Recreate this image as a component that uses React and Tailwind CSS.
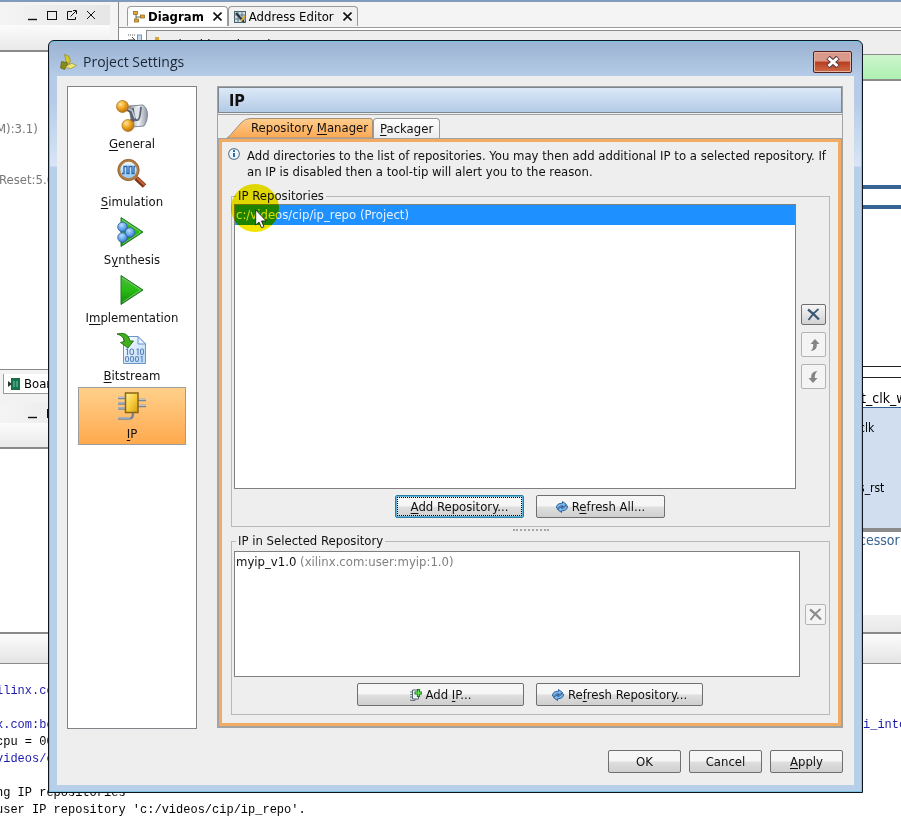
import { useState } from 'react';
import clsx from 'clsx';

const SECTIONS = [
  { name: 'General', key: 0, Icon: GeneralIcon },
  { name: 'Simulation', key: 0, Icon: SimulationIcon },
  { name: 'Synthesis', key: 1, Icon: SynthesisIcon },
  { name: 'Implementation', key: 1, Icon: ImplementationIcon },
  { name: 'Bitstream', key: 0, Icon: BitstreamIcon },
  { name: 'IP', key: 0, Icon: ChipIcon },
];

/* ── Icons ── */
function GeneralIcon() {
  return (
    <svg className="w-8 h-8" viewBox="0 0 32 32">
      <defs>
        <radialGradient id="ball" cx="0.35" cy="0.3" r="0.8">
          <stop offset="0" stopColor="#ffe49a" />
          <stop offset="0.45" stopColor="#f0a823" />
          <stop offset="1" stopColor="#a8660c" />
        </radialGradient>
        <linearGradient id="steel" x1="0" x2="1">
          <stop offset="0" stopColor="#7f8792" />
          <stop offset="0.5" stopColor="#f4f6f9" />
          <stop offset="1" stopColor="#8c95a3" />
        </linearGradient>
      </defs>
      <path d="M13 6 L27 5 Q31.500 8 31.500 15 Q31.500 22 28 26 L16 27 Z" fill="url(#steel)" stroke="#838b98" />
      <path d="M17 8 L18 17 Q19 21 22 20 Q24 19 25 7" fill="#dfe4ec" stroke="#5c6472" strokeWidth="1.800" />
      <path d="M7 7 L15 11 L18 19 L12 25" fill="none" stroke="#59606d" strokeWidth="4" />
      <path d="M8 6.500 L16 10.500 L19 18.500" fill="none" stroke="#c7ccd5" strokeWidth="1.500" />
      <circle cx="6.500" cy="6.500" r="6" fill="url(#ball)" stroke="#a56a16" strokeWidth="0.700" />
      <circle cx="12" cy="25.500" r="6" fill="url(#ball)" stroke="#a56a16" strokeWidth="0.700" />
    </svg>
  );
}

function SimulationIcon() {
  return (
    <svg className="w-8 h-8" viewBox="0 0 32 32">
      <defs>
        <linearGradient id="lens" x1="0" y1="0" x2="0" y2="1">
          <stop offset="0" stopColor="#f3faff" />
          <stop offset="1" stopColor="#86c5f4" />
        </linearGradient>
      </defs>
      <path d="M20 20 L28.500 28" stroke="#7c3213" strokeWidth="5" />
      <path d="M21 20 L28.500 27" stroke="#c8653a" strokeWidth="2" />
      <circle cx="12.500" cy="12" r="9.500" fill="url(#lens)" stroke="#b57a3c" strokeWidth="2.500" />
      <circle cx="12.500" cy="12" r="10.700" fill="none" stroke="#7d572f" strokeWidth="0.700" />
      <path d="M6 15.500 H8 V8.500 H11 V15.500 H13 V8.500 H16 V15.500 H18 V8.500 H19.500" fill="none" stroke="#2465ad" strokeWidth="1.300" />
    </svg>
  );
}

function Triangle() {
  return (
    <>
      <defs>
        <linearGradient id="green" x1="0" y1="0" x2="0" y2="1">
          <stop offset="0" stopColor="#54b845" />
          <stop offset="0.5" stopColor="#27bd12" />
          <stop offset="1" stopColor="#168311" />
        </linearGradient>
      </defs>
      <path d="M5 1.500 L27 16 L5 30.500 Z" fill="url(#green)" stroke="#23782a" strokeLinejoin="round" />
      <path d="M6.500 4 L24.500 16 L6.500 28" fill="none" stroke="#7bd36a" strokeWidth="0.800" />
    </>
  );
}

function SynthesisIcon() {
  return (
    <svg className="w-8 h-8" viewBox="0 0 32 32">
      <defs>
        <radialGradient id="blue" cx="0.4" cy="0.3" r="0.8">
          <stop offset="0" stopColor="#b8ddff" />
          <stop offset="0.6" stopColor="#5b9ee6" />
          <stop offset="1" stopColor="#2b62ac" />
        </radialGradient>
      </defs>
      <Triangle />
      <g fill="url(#blue)" stroke="#2c5f9f" strokeWidth="0.800">
        <circle cx="6.500" cy="11" r="4.800" />
        <circle cx="6.500" cy="21.500" r="4.800" />
        <circle cx="14" cy="16.500" r="4.800" />
      </g>
    </svg>
  );
}

function ImplementationIcon() {
  return (
    <svg className="w-8 h-8" viewBox="0 0 32 32">
      <Triangle />
    </svg>
  );
}

function BitstreamIcon() {
  return (
    <svg className="w-8 h-8" viewBox="0 0 32 32">
      <defs>
        <linearGradient id="sheet" x1="0" y1="0" x2="1" y2="1">
          <stop offset="0" stopColor="#ffffff" />
          <stop offset="1" stopColor="#b4d7f7" />
        </linearGradient>
      </defs>
      <path d="M7.500 4.500 H22 L29.500 12 V31.500 H7.500 Z" fill="url(#sheet)" stroke="#6f95c8" />
      <path d="M22 4.500 V12 H29.500 Z" fill="#e6f2ff" stroke="#6f95c8" />
      <g fill="none" stroke="#5a84bb" strokeWidth="1.100">
        <path d="M10 17.500 L11.500 17 V23 M20.500 17.500 L22 17 V23" />
        <rect x="14" y="17" width="3.500" height="5.500" rx="1.500" />
        <rect x="24.500" y="17" width="3" height="5.500" rx="1.500" />
        <rect x="9.500" y="24.500" width="3" height="5" rx="1.500" />
        <rect x="14.500" y="24.500" width="3" height="5" rx="1.500" />
        <rect x="19.500" y="24.500" width="3" height="5" rx="1.500" />
        <path d="M24.500 25 L26 24.500 V30" />
      </g>
      <path d="M1 2 Q12 -1 14 9 H17.500 L12 16 L4.500 10.500 L8.500 9.500 Q8 4 1 2 Z" fill="#41b01c" stroke="#1f6d12" strokeWidth="0.900" />
    </svg>
  );
}

function ChipIcon() {
  return (
    <svg className="w-8 h-8" viewBox="0 0 32 32">
      <defs>
        <linearGradient id="gold" x1="0" y1="0" x2="1" y2="1">
          <stop offset="0" stopColor="#ffef9b" />
          <stop offset="0.5" stopColor="#f7cd3c" />
          <stop offset="1" stopColor="#d69e13" />
        </linearGradient>
      </defs>
      <g fill="none" stroke="#77879a" strokeWidth="2.600">
        <path d="M2 8 H9 M2 13.500 H9 M2 18.500 H9 M22 10 H30 M22 16 H30 M2 28.500 H14 Q17 28.500 17 23" />
      </g>
      <g fill="none" stroke="#c8d2dd" strokeWidth="0.800">
        <path d="M2 7.500 H9 M2 13 H9 M2 18 H9 M22 9.500 H30 M22 15.500 H30 M2 28 H14" />
      </g>
      <rect x="9.500" y="3" width="12.500" height="19.500" fill="url(#gold)" stroke="#8b6414" strokeWidth="1.500" />
    </svg>
  );
}

function LogoIcon() {
  return (
    <svg className="w-[17px] h-4" viewBox="0 0 17 16">
      <path d="M4.500 0.500 L8.500 2 L10.500 6.500 L9.500 9.500 L6.500 8.500 Z" fill="#d8cc24" stroke="#8c8614" strokeWidth="0.700" />
      <path d="M7 8.500 L1.500 7.500 L0.500 14 L4.500 15.500 L7.500 11 Z" fill="#878a1b" stroke="#5d6312" strokeWidth="0.700" />
      <path d="M8 11 L12 9.300 L16.500 11.500 L11 14.500 L5.500 13.500 Z" fill="#f0e77a" stroke="#99922a" strokeWidth="0.700" />
    </svg>
  );
}

function InfoIcon() {
  return (
    <svg className="w-3 h-3 shrink-0" viewBox="0 0 12 12">
      <circle cx="6" cy="6" r="5.400" fill="#eef7fd" stroke="#66798b" strokeWidth="1.100" />
      <rect x="5" y="2" width="2" height="2" fill="#2b6ea8" />
      <path d="M5 5 H7 V9 H5 Z" fill="#2b6ea8" />
    </svg>
  );
}

function RefreshIcon() {
  return (
    <svg className="w-3 h-3" viewBox="0 0 12 12">
      <g fill="#7db8ee" stroke="#1f538f" strokeWidth="0.900" strokeLinejoin="round">
        <path d="M0.500 7 Q0.500 2.500 5.500 2.300 H6.500 V0.500 L10.500 3.500 L6.500 6.500 V4.700 H5.500 Q3 5 2.500 7.500 Z" />
        <path d="M11.500 5 Q11.500 9.500 6.500 9.700 H5.500 V11.500 L1.500 8.500 L5.500 5.500 V7.300 H6.500 Q9 7 9.500 4.500 Z" />
      </g>
    </svg>
  );
}

function AddIpIcon() {
  return (
    <svg className="w-3 h-3" viewBox="0 0 12 12">
      <path d="M2.500 1 H8.500 V10 H2.500 Z" fill="#eef3f9" stroke="#59626f" />
      <path d="M0 3 H2 M0 5.500 H2 M0 8 H2 M0.500 10.500 V11.500 H5 V10" fill="none" stroke="#6d7887" />
      <path d="M8.500 0 V8 M4.500 4 H12" stroke="#147a1c" strokeWidth="3.200" />
      <path d="M8.500 1 V7 M5.500 4 H11.300" stroke="#63dd55" strokeWidth="1.300" />
    </svg>
  );
}

function CrossIcon({ color }) {
  return (
    <svg className="w-[13px] h-[13px]" viewBox="0 0 13 13" fill="none" stroke={color}>
      <path d="M1 1.500 Q7 6 12 11.500" strokeWidth="2.200" />
      <path d="M11.500 1 Q6 5 1.500 12" strokeWidth="1.800" />
    </svg>
  );
}

function ArrowIcon({ down }) {
  return (
    <svg className={clsx('w-3 h-3', down && 'rotate-180')} viewBox="0 0 12 12">
      <path d="M7 0 L11.500 5 H8.800 V7 Q8.300 11.500 2.500 12 Q5.200 10 5.200 7 V5 H2.500 Z" fill="#858585" />
    </svg>
  );
}

function TinyX() {
  return (
    <svg className="w-[9px] h-[9px]" viewBox="0 0 9 9" stroke="#111" strokeWidth="1.600">
      <path d="M0.500 0.500 L8.500 8.500 M8.500 0.500 L0.500 8.500" />
    </svg>
  );
}

/* ── Shared controls ── */

// label with one underlined shortcut letter
function Mnemonic({ text, at }) {
  if (at === undefined) return <span>{text}</span>;
  return (
    <span>
      {text.slice(0, at)}
      <span className="underline underline-offset-2">{text[at]}</span>
      {text.slice(at + 1)}
    </span>
  );
}

function PushButton({ text, at, icon, className, focused }) {
  return (
    <button
      type="button"
      className={clsx(
        'relative h-[23px] flex items-center justify-center gap-1 rounded-xs border bg-linear-to-b from-[#f6f6f6] from-45% via-[#dedede] via-55% to-[#cfcfcf]',
        focused ? 'border-[#2c7da6] ring-1 ring-inset ring-[#5db4dc]' : 'border-[#6f6f6f]',
        className
      )}
    >
      {focused && <span className="absolute inset-px border border-dotted border-black" />}
      {icon}
      <Mnemonic text={text} at={at} />
    </button>
  );
}

function IconButton({ label, disabled, className, children }) {
  return (
    <button
      type="button"
      aria-label={label}
      disabled={disabled}
      className={clsx(
        'flex items-center justify-center rounded-xs border',
        disabled ? 'border-[#b3b3b3] bg-[#f4f4f4]' : 'border-[#6f6f6f] bg-linear-to-b from-[#f6f6f6] to-[#d2d2d2]',
        className
      )}
    >
      {children}
    </button>
  );
}

/* ── Main window behind the dialog ── */
function PanelHeader({ small }) {
  return (
    <div className="h-5 flex items-center justify-end pr-[14px] bg-linear-to-r from-[#f4f4f4] to-[#e6e6e6]">
      <svg className="w-[70px] h-3" viewBox="0 0 70 12" fill="none" stroke="#111">
        <path d="M2 10.500 H11" strokeWidth="1.400" />
        <rect x="21.500" y="2.500" width="9" height="8" />
        {!small && <path d="M46 2.500 H41.500 V10.500 H49.500 V8 M44.500 7.500 L50 2 M47 1.500 H50.500 V5 M61 2 L69 10 M69 2 L61 10" />}
      </svg>
    </div>
  );
}

function LeftColumn() {
  return (
    <div className="w-[110px] shrink-0 flex flex-col bg-white text-[#777] overflow-hidden">
      <div className="h-[3px] bg-[#f4f4f4]" />
      <PanelHeader />
      <div className="h-[27px] bg-linear-to-b from-[#fcfcfc] to-[#e9e9e9] border-b-2 border-[#8a8a8a]" />
      <div className="h-[318px] pt-[69px] border-b border-[#8a8a8a]">
        <p className="-ml-1 leading-4 whitespace-nowrap">M):3.1)</p>
        <p className="mt-[35px] -ml-px leading-4 whitespace-nowrap">Reset:5.0</p>
      </div>
      <div className="h-[33px] pt-1 bg-[#f2f2f2]">
        <button type="button" className="h-5 w-20 ml-[3px] pl-1 flex items-center gap-1 bg-white border border-t-0 border-[#9a9a9a] text-black">
          <svg className="w-3 h-3" viewBox="0 0 12 12">
            <rect x="3" y="0" width="9" height="12" fill="#16734d" />
            <path d="M6 3 V9 M9 3 V9" stroke="#6fd0a0" />
            <path d="M0 3 L4 6 L0 9 Z" fill="#333" />
          </svg>
          Board
        </button>
      </div>
      <PanelHeader small />
      <div className="h-[26px] bg-linear-to-b from-[#fcfcfc] to-[#e9e9e9] border-b-2 border-[#8a8a8a]" />
      <div className="flex-1" />
    </div>
  );
}

function EditorTab({ children, active }) {
  return (
    <div
      className={clsx(
        'h-5 flex items-center gap-[3px] px-[5px] rounded-t-sm border border-b-0 border-[#9a9a9a]',
        active ? 'bg-white font-bold' : 'bg-[#f1f1f1]'
      )}
    >
      {children}
    </div>
  );
}

function RightColumn() {
  return (
    <div className="flex-1 flex flex-col border-l border-[#8a8a8a] bg-white overflow-hidden">
      <div className="h-[25px] shrink-0 pt-1 pl-2 flex bg-[#f4f4f4]">
        <EditorTab active>
          <svg className="w-3 h-3" viewBox="0 0 12 12">
            <path d="M3 2 V10 H6 M3 6 H8" fill="none" stroke="#666" />
            <g fill="#e3a92f" stroke="#87611a" strokeWidth="0.700">
              <rect x="0.500" y="0.500" width="4" height="3" />
              <rect x="1.500" y="8" width="4" height="3" />
              <rect x="7.500" y="4" width="4" height="3" />
            </g>
          </svg>
          Diagram
          <button type="button" aria-label="Close Diagram" className="pl-[6px]"><TinyX /></button>
        </EditorTab>
        <EditorTab>
          <svg className="w-3 h-3" viewBox="0 0 12 12">
            <rect x="0.500" y="0.500" width="11" height="11" fill="#d4dde0" stroke="#49616b" />
            <path d="M0 4 H12 M0 8 H12 M4 0 V12 M8 0 V12" stroke="#587985" />
            <path d="M2 2 L10 11" stroke="#27323a" strokeWidth="2" />
            <path d="M7 10 L11 5" stroke="#e0a92b" strokeWidth="2" />
          </svg>
          Address Editor
          <button type="button" aria-label="Close Address Editor" className="pl-[6px]"><TinyX /></button>
        </EditorTab>
      </div>
      <div className="h-[27px] shrink-0 flex border-t border-[#9a9a9a] bg-white">
        <div className="w-[27px] pt-[6px] pl-2">
          <svg className="w-4 h-3" viewBox="0 0 16 12">
            <path d="M1 1 H9" stroke="#555" strokeDasharray="1 1" />
            <path d="M1 6 H8 M5 3 L8 6 L5 9" fill="none" stroke="#444" />
            <rect x="10.500" y="1" width="4" height="11" fill="#c9dcef" stroke="#6f95c8" />
          </svg>
        </div>
        <div className="mt-0.5 flex-1 flex items-start gap-2 px-2 pt-[6px] border-t border-l border-[#8a8a8a] bg-[#eee]">
          <span className="w-1 h-2 bg-[#d8a72e]" />
          <span className="leading-4">microblaze_board_system</span>
        </div>
      </div>
      <div className="h-[27px] shrink-0 border-t border-b-2 border-[#8a8a8a] bg-linear-to-b from-[#cdf5cd] to-[#adf0b1]" />
      {/* block design canvas */}
      <div className="h-[286px] shrink-0 pt-[104px] border-b border-[#222]">
        <div className="h-1 bg-[#376492]" />
        <div className="h-1 mt-4 bg-[#376492]" />
      </div>
      <div className="mt-[10px] shrink-0 border-t border-[#222] flex justify-end">
        <div className="w-[42px]">
          <p className="h-[29px] pt-3 pl-0.5 text-sm leading-4 whitespace-nowrap text-black">t_clk_wiz</p>
          <div className="h-[125px] pt-3 bg-[#d0deef] border-t border-b-4 border-t-[#376492] border-b-[#8c8c8c] text-xs text-black">
            <p className="leading-4">clk</p>
            <p className="mt-11 leading-4">s_rst</p>
          </div>
          <p className="text-sm leading-4 text-[#376492]">cessor</p>
        </div>
      </div>
      <div className="flex-1" />
      <div className="h-[17px] shrink-0 bg-linear-to-b from-[#f2f2f2] to-[#e8e8e8]" />
    </div>
  );
}

const LOG = [
  { text: 'ilinx.com', blue: true },
  { text: '' },
  { text: 'x.com:board', blue: true, tail: 'i_into' },
  { text: 'cpu = 000' },
  { text: 'videos/ci', blue: true },
  { text: '' },
  { text: 'ng IP repositories' },
  { text: "user IP repository 'c:/videos/cip/ip_repo'." },
];

function Workspace() {
  return (
    <div className="min-h-screen flex flex-col border-t-2 border-[#7f9bbb] bg-[#f4f4f4]">
      <div className="flex-1 flex gap-2">
        <LeftColumn />
        <RightColumn />
      </div>
      <div className="h-8 border-t-2 border-b border-[#8a8a8a] bg-linear-to-b from-[#fcfcfc] to-[#e4e4e4]" />
      <div className="h-[164px] pt-[19px] bg-white overflow-hidden text-xs font-['Liberation_Mono',monospace]">
        {LOG.map((line, i) => (
          <p key={i} className={clsx('h-[17px] flex justify-between leading-[17px] whitespace-pre', line.blue ? 'text-[#1a1aae]' : 'text-black')}>
            <span className="-ml-1">{line.text}</span>
            {line.tail && <span className="w-[38px] overflow-hidden">{line.tail}</span>}
          </p>
        ))}
      </div>
    </div>
  );
}

/* ── Dialog parts ── */
function Sidebar({ current, onSelect }) {
  return (
    <nav className="w-[130px] shrink-0 p-[10px] border border-[#808488] bg-white">
      {SECTIONS.map(({ name, key, Icon }) => (
        <button
          key={name}
          type="button"
          onClick={() => onSelect(name)}
          className={clsx(
            'w-full h-[58px] pt-0.5 flex flex-col items-center gap-1 border leading-4',
            name === current ? 'border-[#9c9c9c] bg-linear-to-b from-[#ffd08a] to-[#ffa94d]' : 'border-transparent'
          )}
        >
          <Icon />
          <Mnemonic text={name} at={key} />
        </button>
      ))}
    </nav>
  );
}

function RepositoryManager() {
  return (
    <div className="flex-1 flex flex-col pl-[9px] pr-2 pb-2 pt-[6px] border-3 border-[#f2ab62] outline outline-[#a3a3a3]">
      <div className="flex gap-[7px] -ml-[3px] -mr-2 mb-2">
        <InfoIcon />
        <p className="leading-4 whitespace-nowrap">
          Add directories to the list of repositories. You may then add additional IP to a selected repository. If
          <br />
          an IP is disabled then a tool-tip will alert you to the reason.
        </p>
      </div>

      <fieldset className="flex-1 flex flex-col min-w-0 pl-0.5 pr-[3px] pb-2 border border-[#b9b9b9]">
        <legend className="ml-0.5 px-0.5 h-4 leading-4">IP Repositories</legend>
        <div className="h-full flex flex-col">
          <div className="flex-1 flex items-center gap-[5px]">
            <ul className="self-stretch flex-1 border border-[#808080] bg-white">
              <li className="h-5 px-px leading-5 bg-[#1e90ff] text-[#e6f3ff]">c:/videos/cip/ip_repo (Project)</li>
            </ul>
            <div className="flex flex-col gap-[7px]">
              <IconButton label="Remove repository" className="w-[25px] h-[21px]"><CrossIcon color="#3c5775" /></IconButton>
              <IconButton label="Move up" disabled className="w-[25px] h-[25px]"><ArrowIcon /></IconButton>
              <IconButton label="Move down" disabled className="w-[25px] h-[25px]"><ArrowIcon down /></IconButton>
            </div>
          </div>
          <div className="mt-[6px] flex justify-center gap-3">
            <PushButton text="Add Repository..." at={0} className="w-[129px]" focused />
            <PushButton text="Refresh All..." at={1} icon={<RefreshIcon />} className="w-[129px]" />
          </div>
        </div>
      </fieldset>

      <div className="h-[6px] flex items-center justify-center">
        <div className="w-9 border-t-2 border-dotted border-[#a5a5a5]" />
      </div>

      <fieldset className="min-w-0 pl-0.5 pr-[3px] pt-0.5 pb-2 border border-[#b9b9b9]">
        <legend className="ml-0.5 px-0.5 h-4 leading-4">IP in Selected Repository</legend>
        <div className="flex items-center gap-[5px]">
          <ul className="h-[126px] flex-1 border border-[#808080] bg-white">
            <li className="h-5 px-px leading-5">
              myip_v1.0 <span className="text-[#808080]">(xilinx.com:user:myip:1.0)</span>
            </li>
          </ul>
          <IconButton label="Remove IP" disabled className="w-[21px] h-[21px]"><CrossIcon color="#8c8c8c" /></IconButton>
        </div>
        <div className="mt-[6px] flex justify-center gap-3">
          <PushButton text="Add IP..." at={4} icon={<AddIpIcon />} className="w-[167px]" />
          <PushButton text="Refresh Repository..." at={2} icon={<RefreshIcon />} className="w-[167px]" />
        </div>
      </fieldset>
    </div>
  );
}

function ProjectSettings() {
  const [section, setSection] = useState('IP');

  return (
    <div
      role="dialog"
      aria-label="Project Settings"
      className="absolute left-12 right-[38px] top-10 bottom-[35px] flex flex-col px-2 pb-[7px] rounded-t-md border border-[#0c1620] ring-1 ring-inset ring-[#7cc3e4] bg-[linear-gradient(to_bottom,#9ab3d1_0px,#b5cbe7_35px,#b5cbe7_60px,#d8e6f6_125px,#b8cfe9_126px)]"
    >
      <div className="h-[35px] shrink-0 flex items-center gap-[6px] pt-[6px] pl-[3px] pr-0.5">
        <LogoIcon />
        <h1 className="flex-1 text-sm font-['Open_Sans',sans-serif] text-[#1b2635]">Project Settings</h1>
        <button
          type="button"
          aria-label="Close"
          className="w-[39px] h-[22px] flex items-center justify-center rounded-xs border border-[#551f1c] ring-1 ring-inset ring-[#e6b3a5] bg-linear-to-b from-[#d99a8c] from-45% via-[#b83d20] via-50% to-[#cf6a45]"
        >
          <svg className="w-4 h-3" viewBox="0 0 16 12">
            <path d="M3 1.500 L13 10.500 M13 1.500 L3 10.500" stroke="#5c3b3b" strokeWidth="5" />
            <path d="M3.500 2 L12.500 10 M12.500 2 L3.500 10" stroke="#fff" strokeWidth="3" />
          </svg>
        </button>
      </div>

      <div className="flex-1 flex flex-col pt-[10px] pb-3 pl-[10px] pr-[11px] bg-[#eee] text-[#111]">
        <div className="flex-1 flex gap-5">
          <Sidebar current={section} onSelect={setSection} />

          <main className="flex-1 min-w-0 flex flex-col border border-[#a3a3a3] mb-px">
            <h2 className="h-[26px] shrink-0 px-[10px] pt-0.5 flex items-center text-base font-bold border border-[#7c8794] bg-linear-to-b from-[#dce9f7] to-[#b3cae6]">IP</h2>
            <div className="mt-px h-6 shrink-0 flex items-end border-t border-[#a3a3a3]">
              <button type="button" className="relative h-5 w-[146px] ml-[9px] pl-[24px] text-left leading-5 whitespace-nowrap">
                <svg className="absolute inset-0 w-full h-full" viewBox="0 0 146 20" preserveAspectRatio="none">
                  <defs>
                    <linearGradient id="tab" x1="0" y1="0" x2="0" y2="1">
                      <stop offset="0" stopColor="#ffcd8c" />
                      <stop offset="1" stopColor="#fba854" />
                    </linearGradient>
                  </defs>
                  <path d="M0 20 Q3 18 6 14 L14 5 Q18 0.500 23 0.500 H143 Q145.500 0.500 145.500 3 V20 Z" fill="url(#tab)" stroke="#a08f7c" />
                </svg>
                <span className="relative"><Mnemonic text="Repository Manager" at={11} /></span>
              </button>
              <button type="button" className="h-5 px-[6px] leading-[18px] rounded-t-sm border border-b-0 border-[#9a9a9a] bg-linear-to-b from-white to-[#ececec]">
                <Mnemonic text="Packager" at={0} />
              </button>
            </div>
            <div className="flex-1 flex flex-col p-px">
              <RepositoryManager />
            </div>
          </main>
        </div>

        <div className="mt-[21px] flex justify-end gap-2">
          <PushButton text="OK" className="w-[73px]" />
          <PushButton text="Cancel" className="w-[73px]" />
          <PushButton text="Apply" at={0} className="w-[73px]" />
        </div>
      </div>
    </div>
  );
}

/* pointer with its click halo */
function Pointer() {
  return (
    <>
      <div className="absolute left-[231px] top-[184px] w-12 h-12 rounded-full bg-[#f0e600] mix-blend-multiply pointer-events-none" />
      <svg className="absolute left-[255px] top-[209px] w-3 h-5 pointer-events-none" viewBox="0 0 12 20">
        <path d="M0.700 0.800 V16 L4 13 L6.500 18.800 L9 17.700 L6.500 12 H11.200 Z" fill="#fff" stroke="#222" strokeWidth="0.900" />
      </svg>
    </>
  );
}

export default function App() {
  return (
    <div className="relative min-h-screen overflow-hidden text-[13px] font-['DejaVu_Sans_Condensed','Noto_Sans',sans-serif]">
      <Workspace />
      <ProjectSettings />
      <Pointer />
    </div>
  );
}
